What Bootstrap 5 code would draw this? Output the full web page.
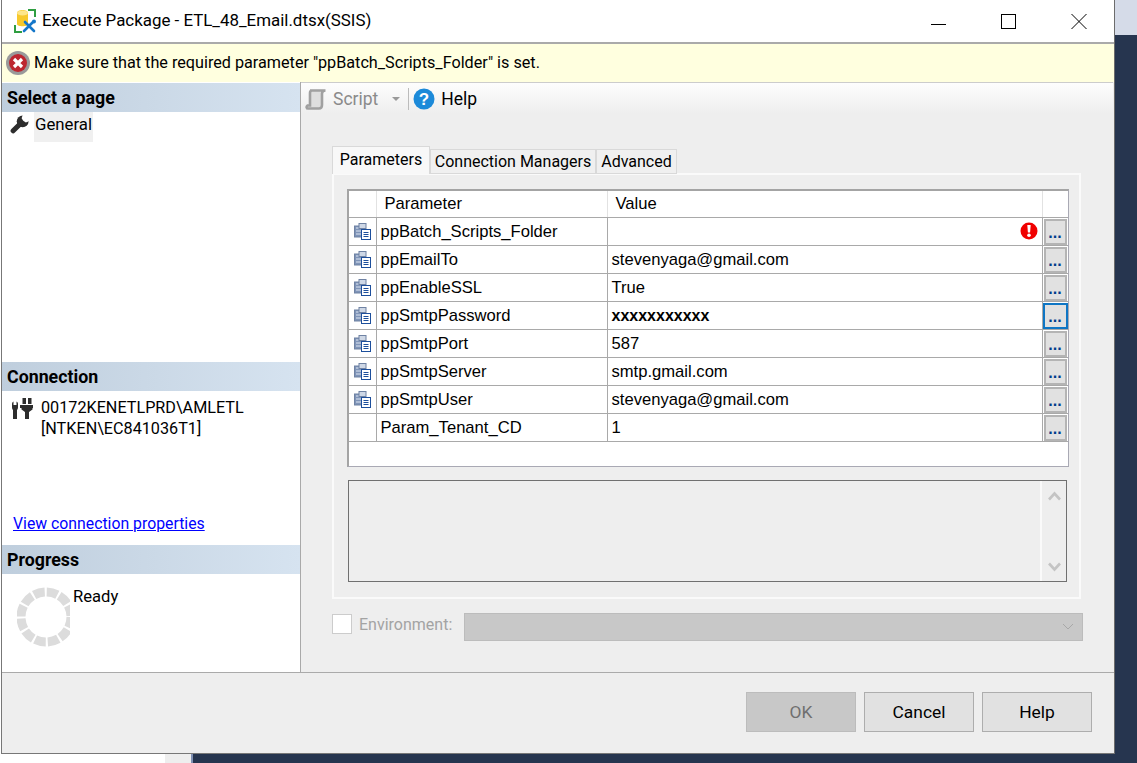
<!DOCTYPE html>
<html lang="en">
<head>
    <meta charset="UTF-8">
    <meta name="viewport" content="width=device-width, initial-scale=1.0">
    <title>Execute Package</title>
    <link href="https://cdn.jsdelivr.net/npm/bootstrap@5.3.0/dist/css/bootstrap.min.css" rel="stylesheet">
    <style>
        html, body { height: 100%; }
        body {
            background: #fff;
            overflow: hidden;
            font-family: Roboto, "Liberation Sans", sans-serif;
            font-size: 16px;
            color: #000;
        }
        .screen-top { height: 754px; }
        .dialog {
            width: 1114px;
            height: 754px;
            margin-left: 1px;
            border-left: 1px solid #777;
            border-right: 1px solid #6c6c6c;
            border-bottom: 1px solid #777;
            background: #eee;
        }
        .side-strip { background: #26354f; }
        .side-strip-top { height: 35px; background: #d5dbe8; }
        .title-bar { height: 42px; background: #fff; padding-left: 11px; }
        .title-text { font-size: 16.9px; margin-left: 5px; }
        .win-btn { width: 70px; height: 42px; }
        .alert-strip {
            height: 40px;
            background: #ffffdf;
            border-top: 2px solid #aaa;
            padding-left: 4px;
        }
        .alert-strip span { margin-left: 4px; font-size: 16.2px; }
        .main-area { height: 590px; }
        .left-pane { width: 299px; background: #fff; border-right: 1px solid #a9a9a9; }
        .left-sec1 { height: 280px; }
        .left-sec1 .sec-head { margin-top: 1px; }
        .left-sec2 { height: 183px; }
        .sec-head {
            height: 29px;
            line-height: 29px;
            padding-left: 5px;
            font-weight: 700;
            font-size: 17.8px;
            background: linear-gradient(90deg, #bfcedd, #d6e3f0);
        }
        .page-item { padding: 0 0 0 8px; height: 30px; gap: 5px; }
        .page-item svg { margin-top: 3px; }
        .page-item span { background: #f0f0f0; padding: 0 1px; line-height: 24px; font-size: 16.8px; }
        .conn-row { padding: 6px 0 0 9px; gap: 8px; line-height: 21px; font-size: 16.2px; }
        .conn-link { color: #00f; margin-left: 11px; font-size: 15.8px; text-decoration: underline; }
        .conn-box { height: 121px; }
        .prog-row { padding-top: 13px; padding-left: 15px; }
        .ready-text { margin-left: 3px; line-height: 20px; font-size: 16.6px; }
        .right-pane { width: 812px; }
        .tool-bar {
            height: 31px;
            padding: 2px 0 0 4px;
            background: linear-gradient(180deg, #fdfdfd, #eeeeee);
            border-top: 1px solid #ccc;
        }
        .tool-gray { color: #8a8a8a; font-size: 17.5px; margin-left: 6px; }
        .tool-caret { width: 0; height: 0; border: 4px solid transparent; border-top: 4px solid #999; margin: 4px 0 0 14px; }
        .tool-sep { width: 1px; height: 22px; background: #bbb; margin: 0 4px 0 8px; }
        .tool-help { font-size: 17.5px; margin-left: 6px; }
        .tab-wrap { margin: 33px 0 0 31px; width: 749px; }
        .tab-list { border: 0; height: 27px; }
        .tab-list .nav-link {
            color: #000;
            background: #f0f0f0;
            border: 1px solid #d9d9d9;
            border-radius: 0;
            padding: 0;
            margin: 3px 0 0;
            height: 25px;
            line-height: 23px;
            text-align: center;
            font-size: 16px;
        }
        .tab-list .nav-link.active {
            background: #f8f8f8;
            border-bottom: 0;
            margin-top: 0;
            height: 28px;
            line-height: 25px;
            position: relative;
            z-index: 2;
        }
        .tab-params { width: 98px; }
        .tab-conn { width: 166px; }
        .tab-adv { width: 81px; }
        .tab-panel {
            height: 426px;
            border: 2px solid #fafafa;
            padding: 14px 12px 0 13px;
        }
        .grid-box {
            width: 722px;
            height: 278px;
            background: #fff;
            border: 1px solid #a9a9b4;
            border-top: 2px solid #a4a4a4;
            border-left: 2px solid #a4a4a4;
        }
        .param-grid {
            table-layout: fixed;
            width: 719px;
            margin: 0;
            font-family: "Liberation Sans", Arial, sans-serif;
            font-size: 16.6px;
            border-collapse: collapse;
        }
        .param-grid td, .param-grid th {
            padding: 0 0 0 4px;
            height: 28px;
            font-weight: 400;
            border: 1px solid #a9a9a9;
            line-height: 26px;
            white-space: nowrap;
            position: relative;
        }
        .param-grid td.pwd-cell { font-weight: 700; font-size: 16px; }
        .param-grid tr:first-child td, .param-grid tr:first-child th { border-top: 0; }
        .param-grid tr > :first-child { border-left: 0; }
        .param-grid tr > :last-child { border-right: 0; }
        .param-grid th { height: 26px; padding-left: 8px; border-color: #e2e2e2; border-bottom-color: #a9a9a9; }
        .param-grid .icon-cell { padding: 0 0 0 5px; }
        .param-grid .dots-cell { padding: 0; }
        .dots-btn {
            display: block;
            width: 23px;
            height: 26px;
            margin: 0 0 0 1px;
            padding: 0;
            border: 2px solid #b4b4b4;
            outline: 0;
            border-radius: 0;
            background: #e1e1e1;
            color: #003c8c;
            font-size: 16px;
            line-height: 24px;
            font-weight: 700;
        }
        .dots-btn.is-focus { border: 2px solid #0f76c4; width: 25px; margin-left: 0; }
        .err-mark { position: absolute; right: 4px; top: 4px; display: block; }
        .desc-box {
            width: 719px;
            height: 102px;
            margin: 13px 0 0 1px;
            border: 1px solid #707070;
            background: #eee;
        }
        .desc-scroll { width: 26px; border-left: 2px solid #fafafa; margin-left: auto; padding: 10px 0 9px; }
        .env-row { margin: 14px 0 0 31px; width: 751px; height: 28px; }
        .form-check-input.env-check[type=checkbox] {
            width: 20px;
            height: 20px;
            margin: 1px 0 0;
            border: 1px solid #ccc;
            border-radius: 0;
            opacity: 1;
            background: #fff;
        }
        .env-label { color: #a3a3a3; margin-left: 7px; width: 105px; line-height: 24px; }
        .env-select {
            width: 619px;
            height: 28px;
            background: #c8c8c8;
            border: 1px solid #bcbcbc;
            padding-right: 8px;
        }
        .foot-bar {
            height: 81px;
            border-top: 1px solid #aaa;
            padding: 19px 22px 0 0;
            gap: 8px;
        }
        .foot-btn {
            width: 110px;
            height: 40px;
            padding: 1px 0 0;
            border: 1px solid #adadad;
            border-radius: 0;
            background: #e1e1e1;
            color: #000;
            font-size: 17.4px;
        }
        .foot-btn:disabled { background: #c8c8c8; color: #6f6f6f; opacity: 1; border-color: #bcbcbc; }
        .screen-bottom { height: 9px; }
        .bottom-white { width: 165px; background: #fff; }
        .bottom-gray { width: 26px; background: #eee; }
        .bottom-line { width: 2px; background: #7f90b4; }
        .bottom-navy { background: #26354f; }
    </style>
</head>
<body>
    <svg width="0" height="0" class="d-block">
        <defs>
            <symbol id="paramIcon" viewBox="0 0 17 17">
                <rect x="0.5" y="3" width="9" height="11" fill="#7f94b8" stroke="#6f82a3"/>
                <path d="M2 5h6M2 8h6M2 11h6" stroke="#dfe6f2"/>
                <rect x="5" y="0.5" width="7" height="5" fill="#cfd8e6" stroke="#6f82a3"/>
                <rect x="7.5" y="6.5" width="9" height="10" fill="#fff" stroke="#1d4f9c"/>
                <path d="M9.500 9.500h5M9.500 11.500h5M9.500 13.500h5" stroke="#1d4f9c"/>
            </symbol>
        </defs>
    </svg>
    <div class="screen-top d-flex">
        <div class="dialog d-flex flex-column flex-shrink-0">
            <div class="title-bar d-flex align-items-center">
                <svg width="24" height="24" viewBox="0 0 24 24">
                    <path d="M2 16v7h7M15 1h7v7" fill="none" stroke="#2f9e41" stroke-width="2"/>
                    <path d="M4 4c0-4 11-4 11 0v11c0 3-11 3-11 0z" fill="#f7c92b"/>
                    <ellipse cx="9.500" cy="4" rx="5.500" ry="2.400" fill="#fde68a"/>
                    <path d="M11 22l9-9M12 13l9 9" stroke="#1577c9" stroke-width="2.600" stroke-linecap="round"/>
                    <circle cx="21" cy="12.500" r="2" fill="#1577c9"/>
                </svg>
                <span class="title-text">Execute Package - ETL_48_Email.dtsx(SSIS)</span>
                <div class="d-flex ms-auto">
                    <div class="win-btn d-flex align-items-center justify-content-center">
                        <svg width="16" height="16" viewBox="0 0 16 16"><path d="M0 11.500h15" stroke="#000"/></svg>
                    </div>
                    <div class="win-btn d-flex align-items-center justify-content-center">
                        <svg width="16" height="16" viewBox="0 0 16 16"><rect x="0.5" y="1.500" width="14" height="14" fill="none" stroke="#000"/></svg>
                    </div>
                    <div class="win-btn d-flex align-items-center justify-content-center">
                        <svg width="16" height="16" viewBox="0 0 16 16"><path d="M0.500 1l15 15M15.500 1l-15 15" stroke="#000"/></svg>
                    </div>
                </div>
            </div>
            <div class="alert-strip d-flex align-items-center">
                <svg width="24" height="24" viewBox="0 0 24 24">
                    <circle cx="12" cy="12" r="12" fill="#9a9a9a"/>
                    <circle cx="12" cy="12" r="9" fill="#bd2730"/>
                    <path d="M8 8l8 8M16 8l-8 8" stroke="#fff" stroke-width="3.200"/>
                </svg>
                <span>Make sure that the required parameter "ppBatch_Scripts_Folder" is set.</span>
            </div>
            <div class="main-area d-flex">
                <div class="left-pane d-flex flex-column">
                    <div class="left-sec1">
                        <div class="sec-head">Select a page</div>
                        <div class="page-item d-flex">
                            <svg width="19" height="19" viewBox="0 0 18 18">
                                <path d="M3 15l7.500-7.500" stroke="#2d2d2d" stroke-width="4.800" stroke-linecap="round"/>
                                <circle cx="12" cy="6" r="5.600" fill="#2d2d2d"/>
                                <path d="M12.500 5.500L18 0h-6l-1 3zM12.500 5.500L18 0v6l-3 1z" fill="#fff"/>
                            </svg>
                            <span>General</span>
                        </div>
                    </div>
                    <div class="left-sec2">
                        <div class="sec-head">Connection</div>
                        <div class="conn-box conn-row d-flex">
                            <svg width="22" height="24" viewBox="0 0 22 24" class="flex-shrink-0">
                                <path d="M0 7c0-1 .5-2 1.500-2.500V8h3V4.500C5.500 5 6 6 6 7v3c0 1.500-.5 2.500-1 3v9H1V13c-.5-.5-1-1.500-1-3z" fill="#2d2d2d" transform="translate(1)"/>
                                <path d="M11.500 1H15v6h-3.500zM17 1h3.500v6H17zM9 8h13.500v3h-1v1.500L18 15v7h-4v-7l-3.500-2.500V11H9z" fill="#2d2d2d"/>
                            </svg>
                            <div>00172KENETLPRD\AMLETL<br>[NTKEN\EC841036T1]</div>
                        </div>
                        <div class="conn-link">View connection properties</div>
                    </div>
                    <div>
                        <div class="sec-head">Progress</div>
                        <div class="prog-row d-flex">
                            <svg width="53" height="60" viewBox="0 0 53 60">
                                <circle cx="29" cy="30" r="25" fill="none" stroke="#dcdcdc" stroke-width="9" stroke-dasharray="11 2.090"/>
                            </svg>
                            <div class="ready-text">Ready</div>
                        </div>
                    </div>
                </div>
                <div class="right-pane">
                    <div class="tool-bar d-flex align-items-center">
                        <svg width="22" height="22" viewBox="0 0 22 22">
                            <path d="M5 2.500h15.500c-2 0-3.500 1-3.500 3V17c0 2-1 3.500-3 3.500H3c-1.500 0-2-2-.5-3H5V5c0-1.500 .5-2.500 2-2.500z" fill="#dedede" stroke="#a0a0a0" stroke-width="2.600"/>
                        </svg>
                        <span class="tool-gray">Script</span>
                        <span class="tool-caret"></span>
                        <span class="tool-sep"></span>
                        <svg width="22" height="22" viewBox="0 0 22 22">
                            <circle cx="11" cy="11" r="10.500" fill="#1c8ad9"/>
                            <text x="11" y="17" text-anchor="middle" fill="#fff" font-family="Liberation Sans" font-weight="700" font-size="17">?</text>
                        </svg>
                        <span class="tool-help">Help</span>
                    </div>
                    <div class="tab-wrap">
                        <ul class="nav tab-list">
                            <li class="nav-item tab-params"><a class="nav-link active" href="#">Parameters</a></li>
                            <li class="nav-item tab-conn"><a class="nav-link" href="#">Connection Managers</a></li>
                            <li class="nav-item tab-adv"><a class="nav-link" href="#">Advanced</a></li>
                        </ul>
                        <div class="tab-panel">
                            <div class="grid-box">
                                <table class="param-grid">
                                    <colgroup>
                                        <col style="width:27px"><col style="width:231px"><col style="width:435px"><col style="width:26px">
                                    </colgroup>
                                    <tr><th></th><th>Parameter</th><th>Value</th><th></th></tr>
                                    <tr>
                                        <td class="icon-cell"><svg class="d-block" width="17" height="17"><use href="#paramIcon"/></svg></td>
                                        <td>ppBatch_Scripts_Folder</td>
                                        <td>
                                            <svg class="err-mark" width="18" height="18" viewBox="0 0 18 18">
                                                <circle cx="9" cy="9" r="8.500" fill="#f00000"/>
                                                <path d="M7.300 3h3.400l-.6 7.500H7.900z" fill="#fff"/>
                                                <circle cx="9" cy="13.300" r="1.800" fill="#fff"/>
                                            </svg>
                                        </td>
                                        <td class="dots-cell"><button class="dots-btn btn">...</button></td>
                                    </tr>
                                    <tr>
                                        <td class="icon-cell"><svg class="d-block" width="17" height="17"><use href="#paramIcon"/></svg></td>
                                        <td>ppEmailTo</td><td>stevenyaga@gmail.com</td>
                                        <td class="dots-cell"><button class="dots-btn btn">...</button></td>
                                    </tr>
                                    <tr>
                                        <td class="icon-cell"><svg class="d-block" width="17" height="17"><use href="#paramIcon"/></svg></td>
                                        <td>ppEnableSSL</td><td>True</td>
                                        <td class="dots-cell"><button class="dots-btn btn">...</button></td>
                                    </tr>
                                    <tr>
                                        <td class="icon-cell"><svg class="d-block" width="17" height="17"><use href="#paramIcon"/></svg></td>
                                        <td>ppSmtpPassword</td><td class="pwd-cell">xxxxxxxxxxx</td>
                                        <td class="dots-cell"><button class="dots-btn btn is-focus">...</button></td>
                                    </tr>
                                    <tr>
                                        <td class="icon-cell"><svg class="d-block" width="17" height="17"><use href="#paramIcon"/></svg></td>
                                        <td>ppSmtpPort</td><td>587</td>
                                        <td class="dots-cell"><button class="dots-btn btn">...</button></td>
                                    </tr>
                                    <tr>
                                        <td class="icon-cell"><svg class="d-block" width="17" height="17"><use href="#paramIcon"/></svg></td>
                                        <td>ppSmtpServer</td><td>smtp.gmail.com</td>
                                        <td class="dots-cell"><button class="dots-btn btn">...</button></td>
                                    </tr>
                                    <tr>
                                        <td class="icon-cell"><svg class="d-block" width="17" height="17"><use href="#paramIcon"/></svg></td>
                                        <td>ppSmtpUser</td><td>stevenyaga@gmail.com</td>
                                        <td class="dots-cell"><button class="dots-btn btn">...</button></td>
                                    </tr>
                                    <tr>
                                        <td class="icon-cell"></td>
                                        <td>Param_Tenant_CD</td><td>1</td>
                                        <td class="dots-cell"><button class="dots-btn btn">...</button></td>
                                    </tr>
                                </table>
                            </div>
                            <div class="desc-box d-flex">
                                <div class="desc-scroll d-flex flex-column justify-content-between align-items-center">
                                    <svg width="13" height="10" viewBox="0 0 13 10"><path d="M1 8.500l5.500-6 5.500 6" fill="none" stroke="#c4c4c4" stroke-width="2.600"/></svg>
                                    <svg width="13" height="10" viewBox="0 0 13 10"><path d="M1 1.500l5.500 6 5.500-6" fill="none" stroke="#c4c4c4" stroke-width="2.600"/></svg>
                                </div>
                            </div>
                        </div>
                    </div>
                    <div class="env-row d-flex align-items-start">
                        <input class="form-check-input env-check" type="checkbox" disabled>
                        <span class="env-label">Environment:</span>
                        <div class="env-select d-flex align-items-center justify-content-end">
                            <svg width="12" height="8" viewBox="0 0 12 8"><path d="M1 1l5 5 5-5" fill="none" stroke="#a8a8a8"/></svg>
                        </div>
                    </div>
                </div>
            </div>
            <div class="foot-bar d-flex justify-content-end">
                <button class="btn foot-btn" disabled>OK</button>
                <button class="btn foot-btn">Cancel</button>
                <button class="btn foot-btn">Help</button>
            </div>
        </div>
        <div class="side-strip flex-grow-1">
            <div class="side-strip-top"></div>
        </div>
    </div>
    <div class="screen-bottom d-flex">
        <div class="bottom-white"></div>
        <div class="bottom-gray"></div>
        <div class="bottom-line"></div>
        <div class="bottom-navy flex-grow-1"></div>
    </div>
    <script src="https://cdn.jsdelivr.net/npm/bootstrap@5.3.0/dist/js/bootstrap.bundle.min.js"></script>
</body>
</html>
